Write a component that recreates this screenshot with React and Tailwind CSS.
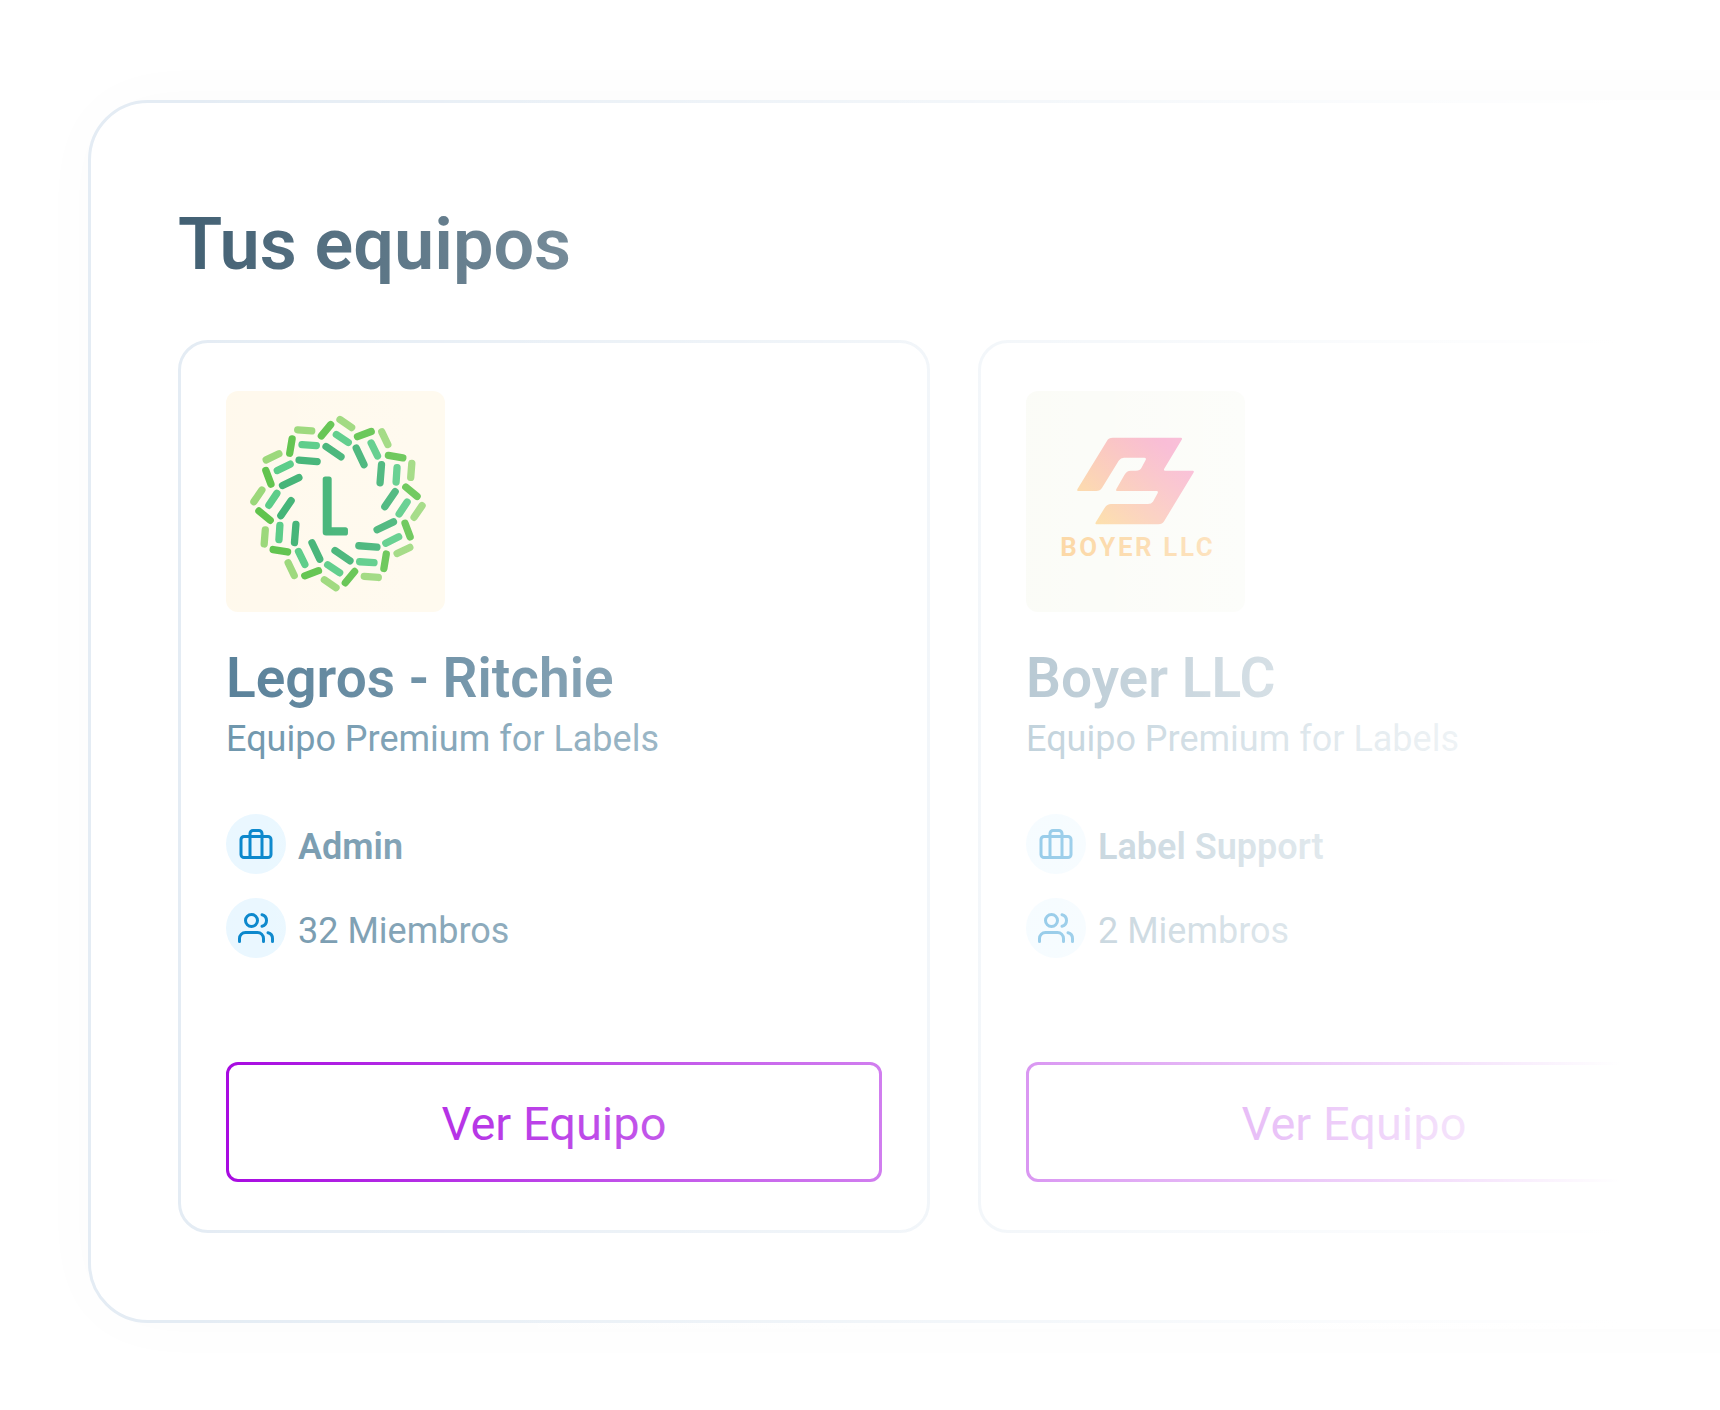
import { FiBriefcase, FiUsers } from "react-icons/fi";

const TURNS = [0, 30, 60, 90, 120, 150, 180, 210, 240, 270, 300, 330];

function LegrosLogo() {
  return (
    <svg viewBox="18 33 657 665" className="h-full w-full" role="img" aria-label="Legros - Ritchie">
      <g strokeWidth="22" strokeLinecap="round" fill="none">
        {TURNS.map((turn) => (
          <g key={turn} transform={`rotate(${turn} 354 372)`}>
            <path d="M360 119L395 143" stroke="#96d673" />
            <path d="M332 134L304 168" stroke="#57c043" />
            <path d="M349 164L385 188" stroke="#50c980" />
            <path d="M318 200L363 231" stroke="#37af6e" />
          </g>
        ))}
      </g>
      <path
        d="M308 298Q308 290 316 290H327Q335 290 335 298V443H376Q384 443 384 451V460Q384 468 376 468H318Q308 468 308 458Z"
        fill="#37af6e"
      />
    </svg>
  );
}

function BoyerLogo() {
  return (
    <svg viewBox="18 33 657 665" className="h-full w-full" role="img" aria-label="Boyer LLC">
      <defs>
        <linearGradient id="boyer" gradientUnits="userSpaceOnUse" x1="215" y1="410" x2="440" y2="190">
          <stop offset="0" stopColor="#f9aa20" />
          <stop offset="1" stopColor="#ec2f80" />
        </linearGradient>
      </defs>
      <path
        d="M172 328L260 184Q266 174 278 174H483Q488 174 486 179L433 267Q430 273 436 273H519Q524 273 521 279L433 424Q427 434 416 434H229Q224 434 227 428L254 384Q261 373 273 373H384Q394 373 399 366L413 341Q416 334 410 334H291Q286 334 289 328L313 286Q320 273 332 273H348Q360 273 365 263L377 241Q380 234 373 234H312Q302 234 296 243L246 324Q240 334 228 334H174Q169 334 172 328Z"
        fill="url(#boyer)"
      />
      <text
        x="120"
        y="531"
        fill="#f79c1c"
        className="font-[Roboto,sans-serif] text-[78px] font-bold tracking-widest"
      >
        BOYER LLC
      </text>
    </svg>
  );
}

function Detail({ icon: Icon, children }) {
  return (
    <li className="flex items-center gap-3">
      <span className="flex size-15 shrink-0 items-center justify-center rounded-full bg-[#e9f7ff] text-[#0082ca]">
        <Icon className="size-9" aria-hidden="true" />
      </span>
      {children}
    </li>
  );
}

function TeamCard({ name, plan, role, members, logo, tile }) {
  return (
    <article className="flex flex-col rounded-[30px] border-3 border-[#e4ecf4] px-[45px] py-12">
      <div className={`h-[221px] w-[219px] overflow-hidden rounded-xl ${tile}`}>{logo}</div>
      <h2 className="mt-8 text-[55px] leading-[68px] font-semibold text-[#547d96]">{name}</h2>
      <p className="text-4xl leading-[54px] text-[#6a93aa]">{plan}</p>
      <ul className="mt-12 flex flex-col gap-6 text-4xl leading-[54px] text-[#6e94aa]">
        <Detail icon={FiBriefcase}>
          <span className="pt-1.5 font-semibold">{role}</span>
        </Detail>
        <Detail icon={FiUsers}>
          <span className="pt-1.5">{members} Miembros</span>
        </Detail>
      </ul>
      <button
        type="button"
        className="mt-26 h-30 w-full rounded-xl border-3 border-[#a503e0] pt-1 text-[47px] text-[#a503e0]"
      >
        Ver Equipo
      </button>
    </article>
  );
}

export default function App() {
  return (
    <main className="overflow-hidden bg-white pt-[100px] pb-[87px] pl-[88px] font-[Roboto,sans-serif]">
      <section className="relative -mr-24 rounded-[60px] border-3 border-[#e4ecf4] bg-white p-[87px] shadow-[0_0_72px_rgba(0,0,0,0.02)]">
        <h1 className="mb-10 text-7xl leading-[110px] font-semibold text-[#426073]">Tus equipos</h1>
        <div className="grid auto-cols-[752px] grid-flow-col gap-12">
          <TeamCard
            name="Legros - Ritchie"
            plan="Equipo Premium for Labels"
            role="Admin"
            members={32}
            logo={<LegrosLogo />}
            tile="bg-[#fff9ec]"
          />
          <TeamCard
            name="Boyer LLC"
            plan="Equipo Premium for Labels"
            role="Label Support"
            members={2}
            logo={<BoyerLogo />}
            tile="bg-[#f5f7ec]"
          />
        </div>
        <div
          aria-hidden="true"
          className="pointer-events-none absolute -inset-[3px] -bottom-[9px] bg-[linear-gradient(90deg,rgba(255,255,255,0)_90px,#fff_1532px)]"
        />
      </section>
    </main>
  );
}
